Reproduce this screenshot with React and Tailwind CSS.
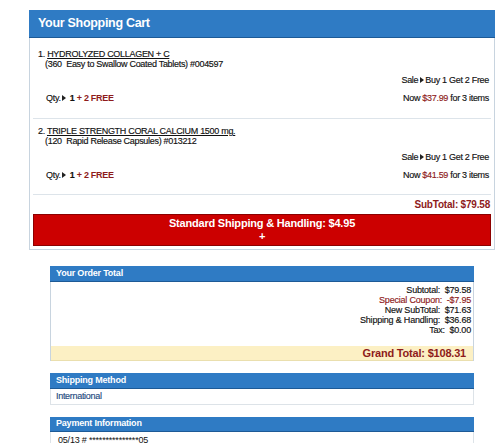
import React from "react";

const Tri = () => (
  <svg width="4" height="6" viewBox="0 0 4 6" className="inline-block mx-[1.5px] align-[0px]">
    <path d="M0 0 L4 3 L0 6 Z" fill="#222" />
  </svg>
);

function Item({ n, name, desc, price, first }) {
  return (
    <div
      className={`${first ? "pt-[11px] pb-[15px]" : "pt-[7px] pb-[14px]"} border-b border-[#dde4ea] pl-[5px] pr-[2px] text-[9px] leading-[10px] tracking-[-0.3px] text-[#111] [-webkit-text-stroke:0.15px_#111]`}
    >
      <div>
        {n}. <span className="underline">{name}</span>
      </div>
      <div className="pl-[7px]">{desc}</div>
      <div className="mt-[6px] text-right">
        Sale<Tri />Buy 1 Get 2 Free
      </div>
      <div className="mt-[8px] flex justify-between">
        <span className="pl-[8px]">
          Qty.<Tri /> <b>1</b> <b className="text-[#8e1b1b] [-webkit-text-stroke:0px]">+ 2 FREE</b>
        </span>
        <span>
          Now <span className="text-[#8e1b1b] [-webkit-text-stroke:0.15px_#8e1b1b]">{price}</span> for 3 items
        </span>
      </div>
    </div>
  );
}

function BlueHead({ children, h = "h-[16px]" }) {
  return (
    <div
      className={`${h} bg-[#2f7bc4] border-b border-[#1d5a96] flex items-center pl-[6px] text-white text-[9px] font-bold tracking-[-0.2px]`}
    >
      {children}
    </div>
  );
}

export default function App() {
  return (
    <div className="bg-white w-[500px] h-[443px] overflow-hidden pt-[10px] font-['Liberation_Sans',Arial,sans-serif]">
      <div className="ml-[29px] w-[466px]">
        <div className="h-[28px] bg-[#2f7bc4] border-b border-[#1d5a96] flex items-center pl-[9px] text-white text-[12.5px] font-bold tracking-[-0.3px]">
          Your Shopping Cart
        </div>
        <div className="border-x border-b border-[#c8d4df] px-[3px] pb-[3px]">
          <Item
            first
            n="1"
            name="HYDROLYZED COLLAGEN + C"
            desc={"(360\u00a0 Easy to Swallow Coated Tablets) #004597"}
            price="$37.99"
          />
          <Item
            n="2"
            name="TRIPLE STRENGTH CORAL CALCIUM 1500 mg."
            desc={"(120\u00a0 Rapid Release Capsules) #013212"}
            price="$41.59"
          />
          <div className="mt-[5px] text-right pr-[1px] text-[10px] leading-[10px] font-bold text-[#8e1b1b] tracking-[-0.2px]">
            SubTotal: $79.58
          </div>
          <div className="mt-[4px] h-[32px] bg-[#cc0000] border border-[#8c0000] flex flex-col items-center justify-center text-white font-bold text-[11px] leading-[13px] tracking-[-0.2px]">
            <div>Standard Shipping &amp; Handling: $4.95</div>
            <div>+</div>
          </div>
        </div>
      </div>

      <div className="ml-[50px] w-[424px] mt-[16px]">
        <BlueHead>Your Order Total</BlueHead>
        <div className="border-x border-[#c8d4df]">
          <div className="pt-[3px] pb-[11px] pr-[2px] text-right text-[9px] leading-[10px] tracking-[-0.2px] text-[#111] [-webkit-text-stroke:0.15px_#111]">
            <div>Subtotal:&nbsp; $79.58</div>
            <div className="text-[#8e1b1b] [-webkit-text-stroke:0.15px_#8e1b1b]">Special Coupon:&nbsp; -$7.95</div>
            <div>New SubTotal:&nbsp; $71.63</div>
            <div>Shipping &amp; Handling:&nbsp; $36.68</div>
            <div>Tax:&nbsp; $0.00</div>
          </div>
          <div className="h-[15px] bg-[#fcf0c4] border-b border-[#eadfae] flex items-center justify-end pr-[7px] text-[11px] font-bold text-[#8e1b1b] tracking-[-0.2px]">
            Grand Total: $108.31
          </div>
        </div>

        <div className="mt-[12px]">
          <BlueHead>Shipping Method</BlueHead>
          <div className="h-[16px] border-x border-b border-[#dde3e8] flex items-center pl-[5px] text-[9px] tracking-[-0.3px] text-[#1f4a80] [-webkit-text-stroke:0.15px_#1f4a80]">
            International
          </div>
        </div>

        <div className="mt-[12px]">
          <BlueHead h="h-[15px]">Payment Information</BlueHead>
          <div className="border-x border-[#dde3e8] pl-[7px] pt-[3px] text-[9px] leading-[10px] tracking-[-0.2px] text-[#111]">
            05/13 # ***************05
          </div>
        </div>
      </div>
    </div>
  );
}
